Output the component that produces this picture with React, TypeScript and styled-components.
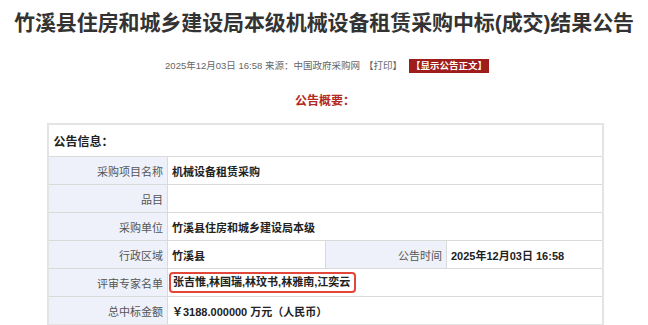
import styled, { createGlobalStyle } from "styled-components";

const GlobalStyle = createGlobalStyle`
  html, body {
    margin: 0;
    padding: 0;
    background: #ffffff;
  }
  body {
    font-family: "Liberation Sans", "Noto Sans CJK SC", sans-serif;
    color: #333333;
  }
`;

const Page = styled.div`
  width: 648px;
  height: 325px;
  overflow: hidden;
  display: flex;
  flex-direction: column;
  align-items: center;
`;

const Title = styled.h1`
  margin: 9px 0 0;
  font-size: 21px;
  line-height: 28px;
  font-weight: 700;
  color: #333333;
  white-space: nowrap;
  letter-spacing: -0.1px;
`;

const Meta = styled.div`
  margin-top: 22px;
  display: flex;
  align-items: center;
  gap: 4px;
  font-size: 9.5px;
  line-height: 14px;
  color: #666666;
  padding-left: 6px;
`;

const ShowButton = styled.span`
  margin-left: 3px;
  padding: 0 2px;
  background: #9f1d1b;
  color: #ffffff;
  font-weight: 600;
`;

const Summary = styled.div`
  margin-top: 20px;
  font-size: 12px;
  line-height: 16px;
  font-weight: 700;
  color: #b3281f;
  padding-left: 2px;
`;

const Table = styled.table`
  margin-top: 14px;
  margin-left: 2px;
  width: 557px;
  border-collapse: collapse;
  border: 2px solid #e4e4e4;
  table-layout: fixed;
  font-size: 11px;
`;

const Cell = styled.td<{ $label?: boolean }>`
  height: 27px;
  padding: 0 4px;
  border: 1px solid #dadada;
  background: ${(p) => (p.$label ? "#eef1f9" : "#ffffff")};
  color: ${(p) => (p.$label ? "#555555" : "#222222")};
  font-weight: ${(p) => (p.$label ? 400 : 700)};
  text-align: ${(p) => (p.$label ? "right" : "left")};
  white-space: nowrap;
`;

const HeadCell = styled.td`
  height: 31px;
  padding: 0 5px;
  border: 1px solid #dadada;
  font-weight: 700;
  font-size: 12px;
  color: #222222;
`;

const Highlight = styled.span`
  display: inline-block;
  margin-left: -3px;
  padding: 2px 4px 2px 2px;
  border: 2px solid #e2473a;
  border-radius: 4px;
  line-height: 13px;
`;

const rows: [string, string][] = [
  ["采购项目名称", "机械设备租赁采购"],
  ["品目", ""],
  ["采购单位", "竹溪县住房和城乡建设局本级"],
];

export default function App() {
  return (
    <>
      <GlobalStyle />
      <Page>
        <Title>竹溪县住房和城乡建设局本级机械设备租赁采购中标(成交)结果公告</Title>
        <Meta>
          <span>2025年12月03日 16:58 来源：中国政府采购网</span>
          <span>【打印】</span>
          <ShowButton>【显示公告正文】</ShowButton>
        </Meta>
        <Summary>公告概要：</Summary>
        <Table>
          <colgroup>
            <col style={{ width: 120 }} />
            <col style={{ width: 158 }} />
            <col style={{ width: 121 }} />
            <col />
          </colgroup>
          <tbody>
            <tr>
              <HeadCell colSpan={4}>公告信息：</HeadCell>
            </tr>
            {rows.map(([label, value]) => (
              <tr key={label}>
                <Cell $label>{label}</Cell>
                <Cell colSpan={3}>{value}</Cell>
              </tr>
            ))}
            <tr>
              <Cell $label>行政区域</Cell>
              <Cell>竹溪县</Cell>
              <Cell $label>公告时间</Cell>
              <Cell>2025年12月03日 16:58</Cell>
            </tr>
            <tr>
              <Cell $label>评审专家名单</Cell>
              <Cell colSpan={3}>
                <Highlight>张吉惟,林国瑞,林玟书,林雅南,江奕云</Highlight>
              </Cell>
            </tr>
            <tr>
              <Cell $label>总中标金额</Cell>
              <Cell colSpan={3}>￥3188.000000 万元（人民币）</Cell>
            </tr>
          </tbody>
        </Table>
      </Page>
    </>
  );
}
